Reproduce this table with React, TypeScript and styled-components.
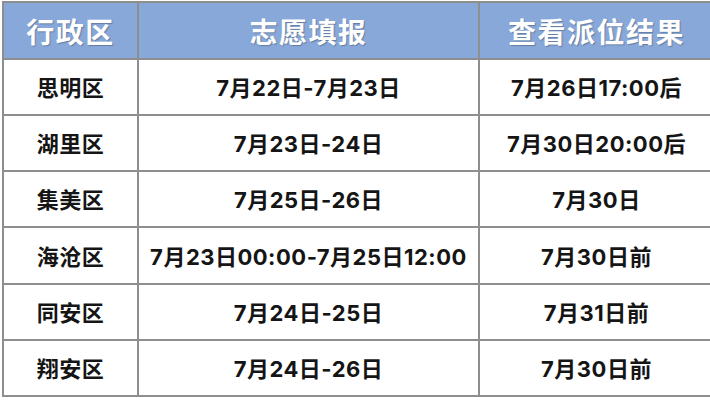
import React from "react";
import styled, { createGlobalStyle } from "styled-components";

const Global = createGlobalStyle`
  html, body { margin: 0; padding: 0; background: #ffffff; }
  body { font-family: "Noto Sans CJK SC", "Noto Sans", sans-serif; }
`;

const Page = styled.div`
  width: 710px;
  height: 400px;
  padding: 1px 2px 0 2px;
  box-sizing: border-box;
  background: #fff;
`;

const Table = styled.table`
  width: 705px;
  height: 396px;
  border-collapse: collapse;
  table-layout: fixed;
  border: 2px solid #8e8e8e;
`;

const HeadCell = styled.th<{ $w: number }>`
  width: ${(p) => p.$w}px;
  height: 55px;
  background: #88a8da;
  color: #ffffff;
  font-family: "Noto Sans CJK SC", sans-serif;
  font-size: 28px;
  font-weight: 700;
  letter-spacing: 1.5px;
  text-align: center;
  padding: 0;
  border: 2px solid #8e8e8e;
  text-shadow: 1px 1px 1px rgba(60, 70, 90, 0.45);
`;

const Cell = styled.td`
  height: 52px;
  color: #151515;
  font-family: Inter, "Noto Sans CJK SC", sans-serif;
  font-size: 22px;
  font-weight: 700;
  text-align: center;
  padding: 0 0 2px 0;
  border: 2px solid #8e8e8e;
  letter-spacing: 0.5px;
  white-space: nowrap;
`;

const rows: [string, string, string][] = [
  ["思明区", "7月22日-7月23日", "7月26日17:00后"],
  ["湖里区", "7月23日-24日", "7月30日20:00后"],
  ["集美区", "7月25日-26日", "7月30日"],
  ["海沧区", "7月23日00:00-7月25日12:00", "7月30日前"],
  ["同安区", "7月24日-25日", "7月31日前"],
  ["翔安区", "7月24日-26日", "7月30日前"],
];

export default function App() {
  return (
    <Page>
      <Global />
      <Table>
        <thead>
          <tr>
            <HeadCell $w={133}>行政区</HeadCell>
            <HeadCell $w={339}>志愿填报</HeadCell>
            <HeadCell $w={233}>查看派位结果</HeadCell>
          </tr>
        </thead>
        <tbody>
          {rows.map((r) => (
            <tr key={r[0]}>
              <Cell>{r[0]}</Cell>
              <Cell>{r[1]}</Cell>
              <Cell>{r[2]}</Cell>
            </tr>
          ))}
        </tbody>
      </Table>
    </Page>
  );
}
